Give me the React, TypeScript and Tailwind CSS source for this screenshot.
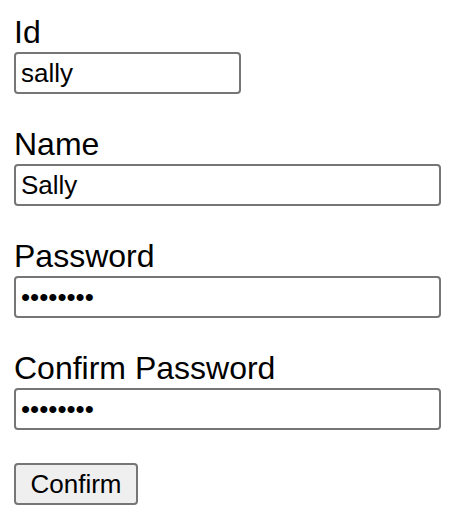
import React from 'react';

// Plain sign-up form: browser-default looking labels, inputs and a grey button.

const FONT = { fontFamily: '"Liberation Sans", Arial, sans-serif' };

function Field({
  label,
  type = 'text',
  value,
  narrow = false,
}: {
  label: string;
  type?: string;
  value: string;
  narrow?: boolean;
}) {
  return (
    <div className="flex flex-col">
      <label className="text-[32px] leading-[40px] text-black">{label}</label>
      <input
        type={type}
        defaultValue={value}
        className={`h-[42px] rounded-[4px] border-2 border-[#767676] bg-white px-[5px] text-[26px] text-black outline-none ${
          narrow ? 'w-[227px]' : 'w-[427px]'
        }`}
        style={FONT}
      />
    </div>
  );
}

export default function App() {
  return (
    <div className="flex min-h-[528px] flex-col gap-[30px] bg-white pl-[14px] pt-[12px]" style={FONT}>
      <Field label="Id" value="sally" narrow />
      <Field label="Name" value="Sally" />
      <Field label="Password" type="password" value="sally123" />
      <Field label="Confirm Password" type="password" value="sally123" />
      <div className="pt-[3px]">
        <button
          type="button"
          className="h-[42px] w-[124px] rounded-[4px] border-2 border-[#767676] bg-[#efefef] text-[26px] text-black"
          style={FONT}
        >
          Confirm
        </button>
      </div>
    </div>
  );
}
